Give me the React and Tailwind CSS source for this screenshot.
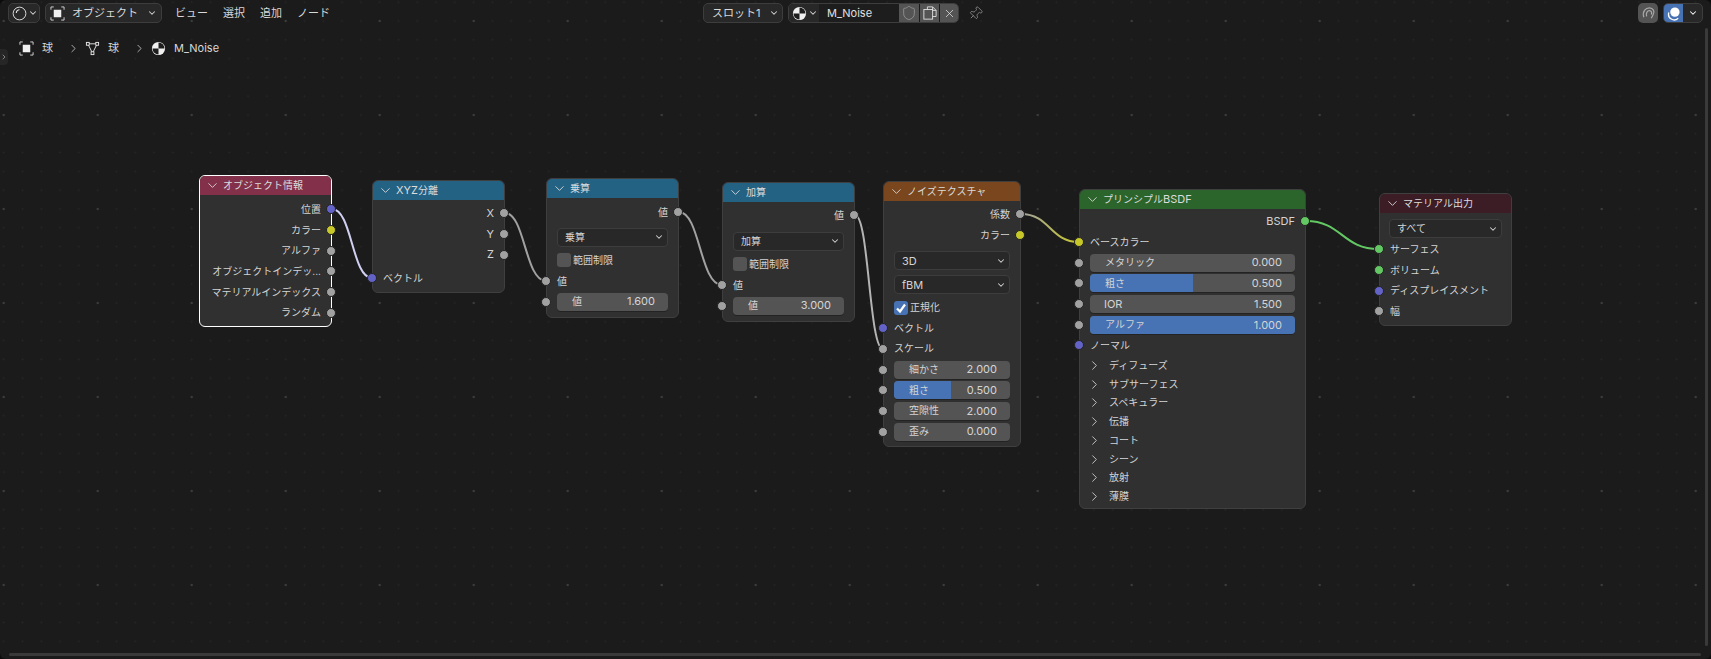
import { ChevronDown, ChevronRight, Pin, X, Shield } from 'lucide-react'

const HEADER = {
  input: 'bg-[#83314a]',
  converter: 'bg-[#246283]',
  texture: 'bg-[#79461d]',
  shader: 'bg-[#2b652b]',
  output: 'bg-[#3c1d26]',
}

const SOCKET = {
  vector: 'bg-[#6363c7]',
  color: 'bg-[#c7c729]',
  value: 'bg-[#a1a1a1]',
  shader: 'bg-[#63c763]',
}

// latin text runs a bit bigger than the japanese labels
const Lat = ({ children }) => <span className="text-[11px]">{children}</span>

function Socket({ type, side }) {
  return (
    <span
      className={`absolute top-1/2 h-[10px] w-[10px] -translate-y-1/2 rounded-full border border-[#232323] ${SOCKET[type]} ${
        side === 'right' ? 'right-[-5px]' : 'left-[-6px]'
      }`}
    />
  )
}

function Out({ label, type = 'value' }) {
  return (
    <div className="relative flex h-[20.7px] items-center justify-end pr-[10px] whitespace-nowrap">
      {label}
      <Socket type={type} side="right" />
    </div>
  )
}

function In({ label, type = 'value' }) {
  return (
    <div className="relative flex h-[20.7px] items-center pl-[10px] whitespace-nowrap">
      {label}
      <Socket type={type} side="left" />
    </div>
  )
}

function Field({ label, value, fill = '', tight }) {
  return (
    <div className="relative flex h-[20.7px] items-center px-[10px]">
      <Socket type="value" side="left" />
      <div className="relative flex h-[18px] w-full items-center overflow-hidden rounded-[4px] bg-[#545454] shadow-[0_1px_0_#232323]">
        {fill && <div className={`absolute inset-y-0 left-0 bg-[#4772b3] ${fill}`} />}
        <span className={`relative ${tight ? 'pl-[14px]' : 'pl-[15px]'}`}>{label}</span>
        <span className="relative mr-[13px] ml-auto text-[11px]">{value}</span>
      </div>
    </div>
  )
}

function Select({ label }) {
  return (
    <div className="flex h-[19px] items-center rounded-[4px] border border-[#3d3d3d] bg-[#282828] pr-[3px] pl-[7px]">
      {label}
      <ChevronDown className="ml-auto h-[10px] w-[10px]" strokeWidth={2.5} />
    </div>
  )
}

function Check({ label, checked }) {
  return (
    <div className="flex h-[15px] items-center gap-[2px]">
      <span className={`flex h-[14px] w-[14px] items-center justify-center rounded-[3px] ${checked ? 'bg-[#4772b3]' : 'bg-[#545454]'}`}>
        {checked && (
          <svg viewBox="0 0 14 14" className="h-[14px] w-[14px]" fill="none" stroke="#fff" strokeWidth="2.2">
            <path d="M3 7.5 L6 10.5 L11 3.5" />
          </svg>
        )}
      </span>
      {label}
    </div>
  )
}

function Node({ title, kind, pos, selected, children }) {
  return (
    <div
      className={`absolute rounded-[6px] bg-[#303030] text-[10px] text-[#d4d4d4] ${pos} ${
        selected ? 'border border-white' : 'border border-[#3f3f3f]'
      }`}
    >
      <div className={`flex h-[19px] items-center gap-[3px] rounded-t-[5px] pl-[5px] text-[#dcdcdc] ${HEADER[kind]}`}>
        <ChevronDown className="h-[15px] w-[15px]" strokeWidth={1.4} />
        <span>{title}</span>
      </div>
      {children}
    </div>
  )
}

function Panel({ label }) {
  return (
    <div className="flex h-[18.8px] items-center pl-[7px]">
      <ChevronRight className="h-[15px] w-[15px]" strokeWidth={1.4} />
      <span className="ml-[7px]">{label}</span>
    </div>
  )
}

function MaterialIcon({ className }) {
  return (
    <svg viewBox="0 0 16 16" className={className}>
      <circle cx="8" cy="8" r="7" fill="#f0f0f0" />
      <path d="M8 1.6 A6.4 6.4 0 0 1 14.4 8 L8 8 Z" fill="#1d1d1d" />
      <path d="M8 8 L8 14.4 A6.4 6.4 0 0 1 1.6 8 Z" fill="#1d1d1d" />
    </svg>
  )
}

function ObjectIcon({ className }) {
  return (
    <svg viewBox="0 0 16 16" className={className} fill="none" stroke="#d8d8d8" strokeWidth="1">
      <rect x="4" y="4" width="8" height="8" fill="#f0f0f0" stroke="none" />
      <path d="M1 4 V1 H4 M12 1 H15 V4 M15 12 V15 H12 M4 15 H1 V12" />
    </svg>
  )
}

function MeshIcon({ className }) {
  return (
    <svg viewBox="0 0 16 16" className={className} fill="none" stroke="#e8e8e8" strokeWidth="1">
      <path d="M3 3 H13 L8 13 Z" />
      <rect x="1.5" y="1.5" width="3" height="3" fill="#1a1a1a" />
      <rect x="11.5" y="1.5" width="3" height="3" fill="#1a1a1a" />
      <rect x="6.5" y="11.5" width="3" height="3" fill="#1a1a1a" />
    </svg>
  )
}

function Links() {
  return (
    <svg className="absolute inset-0 h-full w-full" fill="none" strokeWidth="2" strokeLinecap="round">
      <defs>
        <linearGradient id="noiseToBase" x1="0" x2="1" y1="0" y2="0">
          <stop offset="0" stopColor="#a1a1a1" />
          <stop offset="1" stopColor="#c7c729" />
        </linearGradient>
      </defs>
      <path d="M332 209 C352 209 352 278 372 278" stroke="#cfcff2" />
      <path d="M505 213 C525 213 525 281 546 281" stroke="#a1a1a1" />
      <path d="M679 212 C700 212 700 285 722 285" stroke="#a1a1a1" />
      <path d="M855 215 C869 215 869 349 883 349" stroke="#b4b4b4" />
      <path d="M1021 214 C1050 214 1050 242 1079 242" stroke="url(#noiseToBase)" />
      <path d="M1306 221 C1342 221 1342 249 1379 249" stroke="#63c763" />
    </svg>
  )
}

function TopBar() {
  return (
    <div className="relative flex h-[26px] items-center text-[11px] text-[#d8d8d8]">
      <div className="ml-[8px] flex h-[20px] w-[32px] items-center gap-[1px] rounded-[5px] border border-[#3d3d3d] bg-[#282828] pl-[3px]">
        <svg viewBox="0 0 16 16" className="h-[15px] w-[15px]" fill="none" stroke="#e0e0e0" strokeWidth="1">
          <circle cx="8" cy="8" r="6.8" />
          <path d="M4.6 7.5 A3.4 3.4 0 0 1 8 4" strokeWidth="1.2" />
        </svg>
        <ChevronDown className="h-[10px] w-[10px]" strokeWidth={2.5} />
      </div>
      <div className="ml-[5px] flex h-[20px] w-[117px] items-center rounded-[5px] border border-[#3d3d3d] bg-[#282828] pl-[4px]">
        <ObjectIcon className="h-[15px] w-[15px]" />
        <span className="ml-[7px]">オブジェクト</span>
        <ChevronDown className="mr-[4px] ml-auto h-[10px] w-[10px]" strokeWidth={2.5} />
      </div>
      <div className="ml-[13px] flex gap-[15px]">
        <span>ビュー</span>
        <span>選択</span>
        <span>追加</span>
        <span>ノード</span>
      </div>

      <div className="absolute left-[703px] flex h-[20px] items-center">
        <div className="flex h-[20px] w-[80px] items-center rounded-[5px] border border-[#3d3d3d] bg-[#282828] pl-[8px]">
          スロット1
          <ChevronDown className="mr-[3px] ml-auto h-[10px] w-[10px]" strokeWidth={2.5} />
        </div>
        <div className="ml-[5px] flex h-[20px] w-[171px] items-center overflow-hidden rounded-[5px] border border-[#3d3d3d]">
          <div className="flex h-full w-[30px] items-center gap-[1px] bg-[#282828] pl-[3px]">
            <MaterialIcon className="h-[15px] w-[15px]" />
            <ChevronDown className="h-[10px] w-[10px]" strokeWidth={2.5} />
          </div>
          <div className="flex h-full w-[80px] items-center bg-[#1d1d1d] pl-[8px] text-[#e0e0e0]">M_Noise</div>
          <div className="flex h-full w-[20px] items-center justify-center bg-[#545454]">
            <Shield className="h-[16px] w-[16px] text-[#a0a0a0]" strokeWidth={1.1} />
          </div>
          <div className="ml-[1px] flex h-full w-[19px] items-center justify-center bg-[#545454]">
            <svg viewBox="0 0 16 16" className="h-[14px] w-[14px]" fill="none" stroke="#e4e4e4" strokeWidth="1">
              <path d="M5 4 V1 H11 L15 5 V12 H11" />
              <path d="M11 1 V5 H15" />
              <rect x="1" y="4" width="10" height="11" />
            </svg>
          </div>
          <div className="ml-[1px] flex h-full flex-1 items-center justify-center bg-[#545454]">
            <X className="h-[13px] w-[13px] text-[#e0e0e0]" strokeWidth={1.4} />
          </div>
        </div>
        <Pin className="ml-[9px] h-[15px] w-[15px] rotate-45 text-[#9a9a9a]" strokeWidth={1.2} />
      </div>

      <div className="ml-auto flex items-center gap-[5px] pr-[8px]">
        <div className="flex h-[20px] w-[20px] items-center justify-center rounded-[5px] bg-[#545454]">
          <svg viewBox="0 0 16 16" className="h-[15px] w-[15px]" fill="none" stroke="#a8a8a8" strokeWidth="1.3">
            <path d="M3 12 C1 6 5 2 9 2 C13 2 15 6 13 9 L11 13" />
            <path d="M6 11 C5 7 7 5 9 5 C11 5 12 7 11 9" />
          </svg>
        </div>
        <div className="flex h-[20px] w-[40px] overflow-hidden rounded-[5px] border border-[#3d3d3d] bg-[#282828]">
          <div className="flex h-full w-[19px] items-center justify-center bg-[#4772b3]">
            <svg viewBox="0 0 16 16" className="h-[15px] w-[15px]">
              <circle cx="9.5" cy="6.5" r="5" fill="#fff" />
              <path d="M3 7 A6 6 0 0 0 13 13" fill="none" stroke="#fff" strokeWidth="1.4" />
            </svg>
          </div>
          <div className="flex flex-1 items-center justify-center text-white">
            <ChevronDown className="h-[10px] w-[10px]" strokeWidth={2.5} />
          </div>
        </div>
      </div>
    </div>
  )
}

export default function App() {
  return (
    <div className="h-[659px] w-[1711px] bg-[#0c0c0c] font-['Inter','Noto_Sans_CJK_JP',sans-serif]">
      <div className="relative h-full w-full overflow-hidden rounded-[6px] bg-[#1b1b1b] [background-image:radial-gradient(circle,#3c3c3c_1px,transparent_1.6px),radial-gradient(circle,#262626_0.7px,transparent_1.2px)] [background-position:50.7px_-26px,-5.7px_-7.2px] [background-size:94px_94px,18.8px_18.8px]">
        <TopBar />

        <div className="mt-[12px] ml-[19px] flex h-[20px] items-center text-[11px] text-[#d8d8d8]">
          <ObjectIcon className="h-[15px] w-[15px]" />
          <span className="ml-[8px]">球</span>
          <ChevronRight className="ml-[14px] h-[13px] w-[13px]" strokeWidth={1.4} />
          <MeshIcon className="ml-[5px] h-[15px] w-[15px]" />
          <span className="ml-[8px]">球</span>
          <ChevronRight className="ml-[14px] h-[13px] w-[13px]" strokeWidth={1.4} />
          <MaterialIcon className="ml-[5px] h-[15px] w-[15px]" />
          <span className="ml-[8px]">M_Noise</span>
        </div>

        {/* collapsed toolbar arrow */}
        <div className="absolute top-[49px] left-0 flex h-[16px] w-[8px] items-center justify-center rounded-r-[4px] bg-[#262626]">
          <ChevronRight className="h-[10px] w-[10px] text-[#b0b0b0]" strokeWidth={2} />
        </div>

        <Links />

        <Node title="オブジェクト情報" kind="input" pos="left-[199px] top-[175px] h-[152px] w-[133px]" selected>
          <div className="pt-[4px]">
            <Out label="位置" type="vector" />
            <Out label="カラー" type="color" />
            <Out label="アルファ" />
            <Out label="オブジェクトインデッ..." />
            <Out label="マテリアルインデックス" />
            <Out label="ランダム" />
          </div>
        </Node>

        <Node title={<><Lat>XYZ</Lat>分離</>} kind="converter" pos="left-[372px] top-[180px] h-[113px] w-[133px]">
          <div className="pt-[3px]">
            <Out label={<Lat>X</Lat>} />
            <Out label={<Lat>Y</Lat>} />
            <Out label={<Lat>Z</Lat>} />
            <div className="h-[3px]" />
            <In label="ベクトル" type="vector" />
          </div>
        </Node>

        <Node title="乗算" kind="converter" pos="left-[546px] top-[178px] h-[140px] w-[133px]">
          <div className="pt-[4px]">
            <Out label="値" />
            <div className="mx-[10px] mt-[5px]">
              <Select label="乗算" />
            </div>
            <div className="mx-[10px] mt-[6px]">
              <Check label="範囲制限" />
            </div>
            <div className="mt-[3px]">
              <In label="値" />
            </div>
            <Field label="値" value="1.600" />
          </div>
        </Node>

        <Node title="加算" kind="converter" pos="left-[722px] top-[182px] h-[140px] w-[133px]">
          <div className="pt-[3px]">
            <Out label="値" />
            <div className="mx-[10px] mt-[6px]">
              <Select label="加算" />
            </div>
            <div className="mx-[10px] mt-[6px]">
              <Check label="範囲制限" />
            </div>
            <div className="mt-[3px]">
              <In label="値" />
            </div>
            <Field label="値" value="3.000" />
          </div>
        </Node>

        <Node title="ノイズテクスチャ" kind="texture" pos="left-[883px] top-[181px] h-[266px] w-[138px]">
          <div className="pt-[3px]">
            <Out label="係数" />
            <Out label="カラー" type="color" />
            <div className="mx-[10px] mt-[6px]">
              <Select label={<Lat>3D</Lat>} />
            </div>
            <div className="mx-[10px] mt-[5px]">
              <Select label={<Lat>fBM</Lat>} />
            </div>
            <div className="mx-[10px] mt-[6px]">
              <Check label="正規化" checked />
            </div>
            <div className="mt-[2.5px]">
              <In label="ベクトル" type="vector" />
              <In label="スケール" />
              <Field label="細かさ" value="2.000" />
              <Field label="粗さ" value="0.500" fill="w-[49%]" />
              <Field label="空隙性" value="2.000" />
              <Field label="歪み" value="0.000" />
            </div>
          </div>
        </Node>

        <Node title={<>プリンシプル<Lat>BSDF</Lat></>} kind="shader" pos="left-[1079px] top-[189px] h-[320px] w-[227px]">
          <div className="pt-[2px]">
            <Out label={<Lat>BSDF</Lat>} type="shader" />
            <In label="ベースカラー" type="color" />
            <Field label="メタリック" value="0.000" />
            <Field label="粗さ" value="0.500" fill="w-1/2" />
            <Field label={<Lat>IOR</Lat>} value="1.500" tight />
            <Field label="アルファ" value="1.000" fill="w-full" />
            <In label="ノーマル" type="vector" />
            <Panel label="ディフューズ" />
            <Panel label="サブサーフェス" />
            <Panel label="スペキュラー" />
            <Panel label="伝播" />
            <Panel label="コート" />
            <Panel label="シーン" />
            <Panel label="放射" />
            <Panel label="薄膜" />
          </div>
        </Node>

        <Node title="マテリアル出力" kind="output" pos="left-[1379px] top-[193px] h-[133px] w-[133px]">
          <div className="pt-[6px]">
            <div className="mx-[9px]">
              <Select label="すべて" />
            </div>
            <div className="mt-[1px]">
              <In label="サーフェス" type="shader" />
              <In label="ボリューム" type="shader" />
              <In label="ディスプレイスメント" type="vector" />
              <In label="幅" />
            </div>
          </div>
        </Node>

        {/* scrollbars */}
        <div className="absolute top-[28px] right-[3px] bottom-[13px] w-[3px] rounded-full bg-[#3a3a3a]" />
        <div className="absolute right-[10px] bottom-[3px] left-[9px] h-[3px] rounded-full bg-[#3a3a3a]" />
      </div>
    </div>
  )
}
